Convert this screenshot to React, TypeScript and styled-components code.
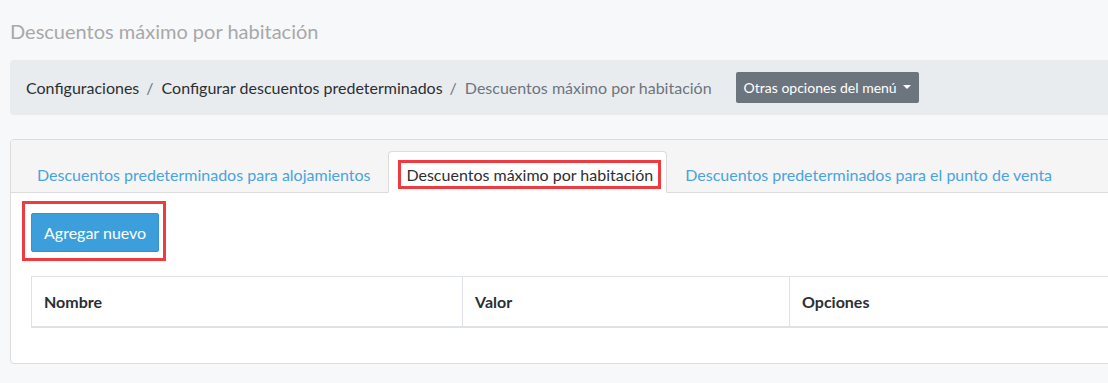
import React from "react";
import styled, { createGlobalStyle } from "styled-components";

const GlobalStyle = createGlobalStyle`
  html, body {
    margin: 0;
    padding: 0;
    overflow: hidden;
    background: #f7f8fa;
    font-family: Lato, "Open Sans", Arial, sans-serif;
    color: #333;
  }
  * { box-sizing: border-box; }
`;

const Page = styled.div`
  width: 1140px;
  padding: 19px 0 0 10px;
`;

const Title = styled.h1`
  margin: 0;
  font-size: 20px;
  font-weight: 400;
  line-height: 24px;
  color: #a8a8a8;
`;

const Breadcrumb = styled.nav`
  margin-top: 17px;
  height: 55px;
  padding: 0 16px;
  background: #e9ecef;
  border-radius: 4px;
  display: flex;
  align-items: center;
`;

const Crumb = styled.span<{ $active?: boolean }>`
  font-size: 16px;
  color: ${(p) => (p.$active ? "#6c757d" : "#2b2f33")};
`;

const Sep = styled.span`
  font-size: 16px;
  color: #6c757d;
  padding: 0 8px 0 7px;
`;

const MenuButton = styled.button`
  margin-left: 24px;
  height: 31px;
  padding: 0 8px;
  background: #6c757d;
  color: #fff;
  border: 0;
  border-radius: 2px;
  font-family: inherit;
  font-size: 14px;
  display: flex;
  align-items: center;
  gap: 6px;
`;

const Caret = styled.span`
  width: 0;
  height: 0;
  border-left: 4px solid transparent;
  border-right: 4px solid transparent;
  border-top: 4px solid #fff;
  margin-top: -1px;
`;

const Card = styled.section`
  margin-top: 24px;
  background: #fff;
  border: 1px solid #dcdcdc;
  border-radius: 4px;
  overflow: hidden;
`;

const TabBar = styled.div`
  height: 53px;
  background: #f5f5f5;
  border-bottom: 1px solid #dcdcdc;
  padding: 0 8px;
  display: flex;
  align-items: flex-end;
`;

const Tab = styled.div<{ $active?: boolean }>`
  height: 42px;
  margin-bottom: -1px;
  padding: 8px ${(p) => (p.$active ? "5px" : "9px")} 0 9px;
  border: 1px solid ${(p) => (p.$active ? "#dcdcdc" : "transparent")};
  border-bottom-color: ${(p) => (p.$active ? "#fff" : "transparent")};
  border-radius: 4px 4px 0 0;
  background: ${(p) => (p.$active ? "#fff" : "transparent")};
  color: ${(p) => (p.$active ? "#2b2f33" : "#4aa3df")};
  font-size: 16px;
`;

const Label = styled.span<{ $marked?: boolean }>`
  display: block;
  line-height: 19px;
  padding: ${(p) => (p.$marked ? "2px 5px" : "5px 8px")};
  border: ${(p) => (p.$marked ? "3px solid #ef3b3f" : "0")};
`;

const Body = styled.div`
  padding: 8px 20px 35px 11px;
`;

const Marked = styled.div`
  display: inline-block;
  border: 3px solid #ef3b3f;
  padding: 9px 4px 6px 6px;
`;

const PrimaryButton = styled.button`
  height: 39px;
  padding: 0 12px;
  background: #3c9fdc;
  border: 1px solid #3592cc;
  border-radius: 2px;
  color: #fff;
  font-family: inherit;
  font-size: 16px;
`;

const Table = styled.table`
  margin: 15px 0 0 9px;
  width: 1110px;
  border-collapse: collapse;
`;

const Th = styled.th<{ $w?: number }>`
  width: ${(p) => (p.$w ? `${p.$w}px` : "auto")};
  height: 50px;
  padding: 0 12px;
  text-align: left;
  font-size: 16px;
  font-weight: 700;
  color: #2b2f33;
  border: 1px solid #dee2e6;
  border-bottom: 2px solid #dee2e6;
`;

export default function App() {
  return (
    <>
      <GlobalStyle />
      <Page>
        <Title>Descuentos máximo por habitación</Title>
        <Breadcrumb>
          <Crumb>Configuraciones</Crumb>
          <Sep>/</Sep>
          <Crumb>Configurar descuentos predeterminados</Crumb>
          <Sep>/</Sep>
          <Crumb $active>Descuentos máximo por habitación</Crumb>
          <MenuButton>
            Otras opciones del menú <Caret />
          </MenuButton>
        </Breadcrumb>
        <Card>
          <TabBar>
            <Tab>
              <Label>Descuentos predeterminados para alojamientos</Label>
            </Tab>
            <Tab $active>
              <Label $marked>Descuentos máximo por habitación</Label>
            </Tab>
            <Tab>
              <Label>Descuentos predeterminados para el punto de venta</Label>
            </Tab>
          </TabBar>
          <Body>
            <Marked>
              <PrimaryButton>Agregar nuevo</PrimaryButton>
            </Marked>
            <Table>
              <thead>
                <tr>
                  <Th $w={431}>Nombre</Th>
                  <Th $w={327}>Valor</Th>
                  <Th>Opciones</Th>
                </tr>
              </thead>
            </Table>
          </Body>
        </Card>
      </Page>
    </>
  );
}
